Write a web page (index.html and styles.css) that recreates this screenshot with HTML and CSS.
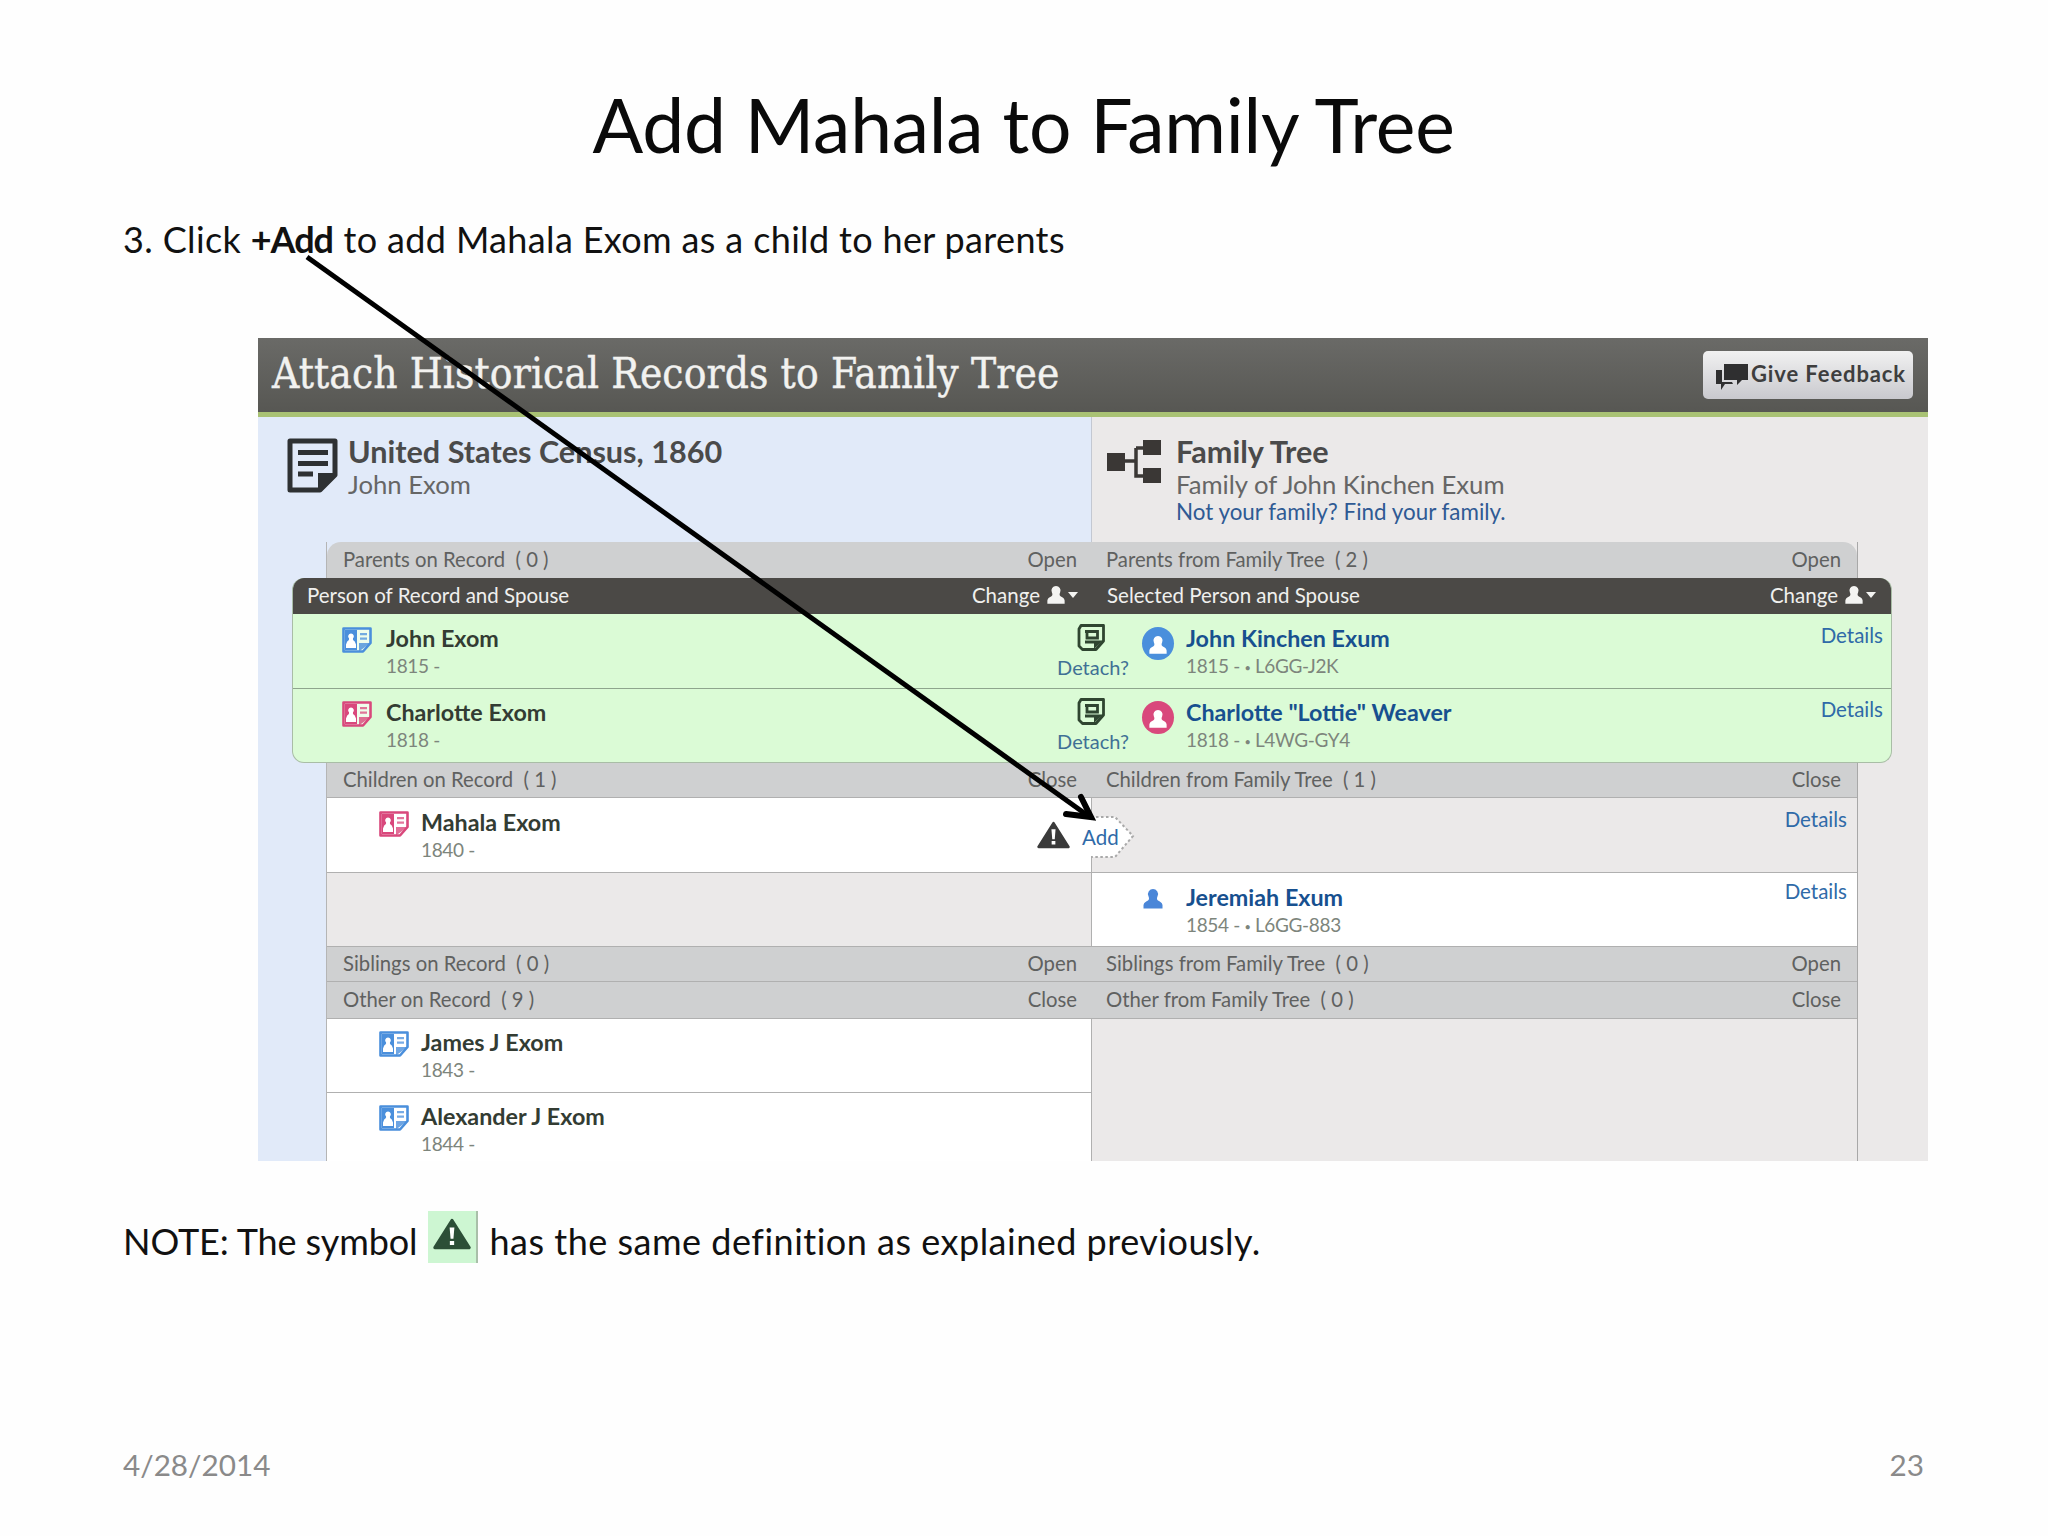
FILE: index.html
```html
<!DOCTYPE html>
<html lang="en">
<head>
<meta charset="utf-8">
<title>Add Mahala to Family Tree</title>
<link rel="stylesheet" href="styles.css">
</head>
<body>
<svg class="defs" width="0" height="0" aria-hidden="true">
  <symbol id="rec" viewBox="0 0 30 26">
    <path d="M1.5 1.5H28.5V16L21 24.5H1.5Z" fill="#fff" fill-opacity=".55" stroke="currentColor" stroke-width="2.6" stroke-linejoin="round"/>
    <path d="M3 3H15V23H3Z" fill="currentColor"/>
    <path d="M9 6.5a2.8 2.8 0 0 1 2 4.8c-.4 1.3.3 2.200 1.800 3.200L14 17.500V21H4V17.500L5.200 14.500C6.700 13.500 7.400 12.600 7 11.300A2.800 2.800 0 0 1 9 6.500Z" fill="#fff"/>
    <path d="M18 6h7v2.200h-7zM18 10.500h7v2.200h-7z" fill="currentColor" opacity=".75"/>
    <path d="M17 24.500V16H28.500Z" fill="currentColor" opacity=".8"/>
  </symbol>
  <symbol id="detach" viewBox="0 0 28 27">
    <path d="M4 1.500H26.500V17L19 25.500H5.500L2 22V5Z" fill="none" stroke="currentColor" stroke-width="2.800" stroke-linejoin="round"/>
    <path d="M8 7.500H20.500V14H10V8" fill="none" stroke="currentColor" stroke-width="2.800"/>
    <path d="M8 18H17" fill="none" stroke="currentColor" stroke-width="2.800"/>
    <path d="M17 25V16.500H26Z" fill="currentColor"/>
  </symbol>
  <symbol id="person" viewBox="0 0 22 22">
    <path d="M11 1a5 5 0 0 1 4.600 7c-.9 2-.9 3.500.4 4.500 1.800 1.200 4 1.800 4.500 4.500v3.500H1.500V17c.5-2.700 2.700-3.300 4.500-4.500 1.300-1 1.300-2.500.4-4.500A5 5 0 0 1 11 1Z" fill="currentColor"/>
  </symbol>
  <symbol id="warn" viewBox="0 0 32 26">
    <path d="M16 1.500 30.500 24.500H1.500Z" fill="currentColor" stroke="currentColor" stroke-width="2.500" stroke-linejoin="round"/>
    <path d="M14 7.500h4l-.8 9.500h-2.400zM14.200 18.800h3.600v3.400h-3.600z" fill="#fff"/>
  </symbol>
</svg>

<main class="slide">
  <h1 class="title">Add Mahala to Family Tree</h1>
  <p class="step">3. Click <b>+Add</b> to add Mahala Exom as a child to her parents</p>

  <section class="app">
    <header class="app-head">
      <h2 class="app-title">Attach Historical Records to Family Tree</h2>
      <button class="feedback" type="button">
        <svg class="feedback-icon" viewBox="0 0 34 28" aria-hidden="true">
          <path d="M9 1H33V17H27L22 22V17H9Z" fill="#2f2f30"/>
          <path d="M1 7H7V19H17L18 21H10L6 27V21H1Z" fill="#2f2f30"/>
        </svg>
        Give Feedback
      </button>
    </header>

    <div class="body">
      <div class="sources">
        <div class="source">
          <svg class="doc-icon" viewBox="0 0 51 55" aria-hidden="true">
            <path d="M3 3H48V37L33 52H3Z" fill="none" stroke="#2e3133" stroke-width="5" stroke-linejoin="round"/>
            <path d="M11 14.500H41M11 25.500H41M11 36H26" stroke="#2e3133" stroke-width="5"/>
            <path d="M31 53V35H49Z" fill="#2e3133"/>
          </svg>
          <div class="source-text">
            <div class="source-name">United States Census, 1860</div>
            <div class="source-sub">John Exom</div>
          </div>
        </div>
        <div class="source source-tree">
          <svg class="tree-icon" viewBox="0 0 54 43" aria-hidden="true">
            <path d="M0 13H18V31H0ZM36 0H54V15H36ZM36 28H54V43H36Z" fill="#3a3735"/>
            <path d="M18 21H29M29 8H36M29 8V36H36" fill="none" stroke="#3a3735" stroke-width="3.500"/>
          </svg>
          <div class="source-text">
            <div class="source-name">Family Tree</div>
            <div class="source-sub">Family of John Kinchen Exum</div>
            <a class="source-link">Not your family? Find your family.</a>
          </div>
        </div>
      </div>

      <div class="table">
        <div class="row bar bar-top">
          <div class="cell-l"><span>Parents on Record&nbsp; ( 0 )</span><span>Open</span></div>
          <div class="cell-r"><span>Parents from Family Tree&nbsp; ( 2 )</span><span>Open</span></div>
        </div>
      </div>

      <div class="selected">
        <div class="sel-head">
          <div class="sel-l"><span>Person of Record and Spouse</span><span class="change">Change <svg class="chg-icon"><use href="#person"/></svg><i class="caret"></i></span></div>
          <div class="sel-r"><span>Selected Person and Spouse</span><span class="change">Change <svg class="chg-icon"><use href="#person"/></svg><i class="caret"></i></span></div>
        </div>
        <div class="sel-row">
          <div class="person sel-person"><svg class="rec male"><use href="#rec"/></svg><div><div class="name">John Exom</div><div class="date">1815 -</div></div></div>
          <div class="detach"><svg class="detach-icon"><use href="#detach"/></svg><a>Detach?</a></div>
          <div class="person tree-person">
            <span class="avatar male-bg"><svg class="avatar-p"><use href="#person"/></svg></span>
            <div class="grow"><div class="name link">John Kinchen Exum</div><div class="date">1815 - <span class="dot">•</span> L6GG-J2K</div></div>
            <a class="details">Details</a>
          </div>
        </div>
        <div class="sel-row sel-row-last">
          <div class="person sel-person"><svg class="rec female"><use href="#rec"/></svg><div><div class="name">Charlotte Exom</div><div class="date">1818 -</div></div></div>
          <div class="detach"><svg class="detach-icon"><use href="#detach"/></svg><a>Detach?</a></div>
          <div class="person tree-person">
            <span class="avatar female-bg"><svg class="avatar-p"><use href="#person"/></svg></span>
            <div class="grow"><div class="name link">Charlotte "Lottie" Weaver</div><div class="date">1818 - <span class="dot">•</span> L4WG-GY4</div></div>
            <a class="details">Details</a>
          </div>
        </div>
      </div>

      <div class="table">
        <div class="row bar bar-children">
          <div class="cell-l"><span>Children on Record&nbsp; ( 1 )</span><span>Close</span></div>
          <div class="cell-r"><span>Children from Family Tree&nbsp; ( 1 )</span><span>Close</span></div>
        </div>
        <div class="row rec-row rec-row-a">
          <div class="white rec-cell">
            <div class="person"><svg class="rec female"><use href="#rec"/></svg><div><div class="name">Mahala Exom</div><div class="date">1840 -</div></div></div>
            <svg class="warn-icon"><use href="#warn"/></svg>
          </div>
          <div class="grey tree-cell"><span></span><a class="details">Details</a></div>
          <div class="add-tag">
            <svg class="add-shape" viewBox="0 0 60 44" aria-hidden="true">
              <path d="M0 2H40L58 21L40 42H0Z" fill="#fff"/>
              <path d="M16 2H40L58 21L40 42H16" fill="none" stroke="#a9a9a9" stroke-width="2" stroke-dasharray="2.500 2.500"/>
            </svg>
            <a class="add-text">Add</a>
          </div>
        </div>
        <div class="row rec-row rec-row-b">
          <div class="grey"></div>
          <div class="white tree-cell">
            <div class="person tree-person-plain"><svg class="small-person"><use href="#person"/></svg><div><div class="name link">Jeremiah Exum</div><div class="date">1854 - <span class="dot">•</span> L6GG-883</div></div></div>
            <a class="details">Details</a>
          </div>
        </div>
        <div class="row bar bar-sib">
          <div class="cell-l"><span>Siblings on Record&nbsp; ( 0 )</span><span>Open</span></div>
          <div class="cell-r"><span>Siblings from Family Tree&nbsp; ( 0 )</span><span>Open</span></div>
        </div>
        <div class="row bar bar-other">
          <div class="cell-l"><span>Other on Record&nbsp; ( 9 )</span><span>Close</span></div>
          <div class="cell-r"><span>Other from Family Tree&nbsp; ( 0 )</span><span>Close</span></div>
        </div>
        <div class="split">
          <div class="split-l">
            <div class="white rec-cell other-row"><div class="person"><svg class="rec male"><use href="#rec"/></svg><div><div class="name">James J Exom</div><div class="date">1843 -</div></div></div></div>
            <div class="white rec-cell other-row"><div class="person"><svg class="rec male"><use href="#rec"/></svg><div><div class="name">Alexander J Exom</div><div class="date">1844 -</div></div></div></div>
          </div>
          <div class="split-r"></div>
        </div>
      </div>
    </div>
  </section>

  <p class="note">
    <span class="note-lead">NOTE: The symbol</span>
    <span class="swatch"><svg class="swatch-icon"><use href="#warn"/></svg></span>
    <span class="note-rest">has the same definition as explained previously.</span>
  </p>

  <footer class="foot"><span>4/28/2014</span><span>23</span></footer>

  <svg class="pointer" viewBox="0 0 2048 1536" aria-hidden="true">
    <path d="M307 257L1087 815" fill="none" stroke="#000" stroke-width="5"/>
    <path d="M1066 814L1091 817L1081 797" fill="none" stroke="#000" stroke-width="6" stroke-linecap="round" stroke-linejoin="miter"/>
  </svg>
</main>
</body>
</html>
```

FILE: styles.css
```css
* { box-sizing: border-box; }
html, body { margin: 0; padding: 0; background: #fff; }
.defs { position: absolute; }
body { font-family: "Lato", "Liberation Sans", sans-serif; color: #000; }

.slide {
  position: relative;
  width: 2048px;
  height: 1536px;
  padding: 77px 124px 51px 123px;
  display: flex;
  flex-direction: column;
  background: #fefefe;
  overflow: hidden;
}
.title {
  margin: 0;
  font-size: 75px;
  font-weight: 400;
  line-height: 94px;
  text-align: center;
  letter-spacing: -0.2px;
  color: #0a0a0a;
}
.step {
  margin: 45px 0 0;
  font-size: 36px;
  line-height: 46px;
  letter-spacing: 0.35px;
  color: #111;
}
.step b { font-weight: 700; letter-spacing: -1px; margin-right: 1px; }

.app {
  margin: 76px 0 0 135px;
  width: 1670px;
  height: 823px;
  overflow: hidden;
  flex: none;
  font-size: 20.500px;
  color: #5e5e5e;
}
.app-head {
  height: 79px;
  padding: 0 15px 5px 14px;
  display: flex;
  align-items: center;
  justify-content: space-between;
  background: linear-gradient(#6a6a67, #575753);
  border-bottom: 5px solid #a9c274;
}
.app-title {
  margin: 2px 0 0;
  font-family: "DejaVu Serif Condensed", "DejaVu Serif", serif;
  font-size: 42px;
  font-weight: 400;
  color: #f2f2f0;
  white-space: nowrap;
  letter-spacing: 0.12px;
  -webkit-text-stroke: 0.4px #f2f2f0;
}
.feedback {
  width: 210px;
  height: 48px;
  margin-top: 4px;
  padding: 0 0 2px 12px;
  display: flex;
  align-items: center;
  gap: 2px;
  border: 0;
  border-radius: 5px;
  background: linear-gradient(#f1f1f1, #c9c9ce);
  font: 700 22px "Lato", sans-serif;
  color: #3e3e3e;
  letter-spacing: 0.9px;
  white-space: nowrap;
}
.feedback-icon { width: 34px; height: 28px; flex: none; margin-top: 6px; }

.body { background: linear-gradient(to right, #e1eaf9 0, #e1eaf9 833px, #ebe9e9 833px); }

.sources { display: grid; grid-template-columns: 833px 837px; height: 125px; }
.source { display: flex; padding: 21px 0 0 29px; gap: 10px; }
.source-tree { padding: 22px 0 0 15px; gap: 15px; border-left: 1px solid #c3c8d2; }
.doc-icon { width: 51px; height: 55px; flex: none; }
.tree-icon { width: 54px; height: 43px; flex: none; margin-top: 1px; }
.source-text { display: flex; flex-direction: column; margin-top: -3px; }
.source-tree .source-text { margin-top: -4px; }
.source-name { font-size: 30.600px; line-height: 34px; font-weight: 700; color: #4a4a4a; white-space: nowrap; }
.source-sub { font-size: 25.700px; line-height: 30px; color: #666; white-space: nowrap; }
.source-link { font-size: 22.400px; line-height: 26px; color: #2f5a94; white-space: nowrap; }

.table { margin-left: 68px; width: 1532px; border-left: 1px solid #b5b5b5; border-right: 1px solid #a8a8a8; }
.row { position: relative; display: grid; grid-template-columns: 764px 766px; }
.bar { background: #cfd0d1; border-bottom: 1px solid #b0b0b0; color: #5f6160; font-size: 20.300px; }
.bar > div { display: flex; align-items: center; justify-content: space-between; padding-bottom: 2px; }
.cell-l { padding: 0 14px 0 16px; }
.cell-r { padding: 0 16px 0 15px; }
.bar-top { height: 36px; border-radius: 14px 14px 0 0; border-bottom: 0; }
.bar-children { height: 35px; }
.bar-sib { height: 35px; }
.bar-other { height: 37px; }

.selected {
  margin-left: 34px;
  width: 1600px;
  height: 185px;
  border-radius: 12px;
  background: #dbfbd6;
  border: 1px solid #a9bda6;
  border-top: 0;
  overflow: hidden;
}
.sel-head {
  height: 36px;
  padding-bottom: 2px;
  display: grid;
  grid-template-columns: 799px 800px;
  background: #4b4946;
  color: #f0f0ee;
  font-size: 20.500px;
}
.sel-head > div { display: flex; align-items: center; justify-content: space-between; }
.sel-l { padding: 0 14px 0 14px; }
.sel-r { padding: 0 16px 0 15px; }
.change { display: inline-flex; align-items: center; gap: 6px; }
.chg-icon { width: 20px; height: 20px; color: #f4f4f2; }
.caret { width: 0; height: 0; margin-left: -4px; border: 5px solid transparent; border-top: 6px solid #f4f4f2; border-bottom: 0; }

.sel-row {
  display: grid;
  grid-template-columns: 764px 72px 1fr;
  height: 75px;
  border-bottom: 1px solid #8ea58d;
}
.sel-row-last { height: 73px; border-bottom: 0; }
.person { display: flex; gap: 14px; }
.sel-person { padding: 11px 0 0 49px; }
.sel-row-last .sel-person, .sel-row-last .tree-person { padding-top: 10px; }
.tree-person { padding: 11px 8px 0 13px; gap: 12px; }
.grow { flex: 1; }
.name { font-size: 23.300px; line-height: 27px; font-weight: 700; color: #333c33; white-space: nowrap; }
.link { color: #17508f; }
.date { font-size: 19px; line-height: 27px; letter-spacing: -0.35px; color: #7d857c; white-space: nowrap; }
.dot { font-size: 11px; vertical-align: 1px; }
.rec { width: 30px; height: 26px; flex: none; margin-top: 2px; }
.male { color: #4a8fdc; }
.female { color: #d9487c; }

.detach { display: flex; flex-direction: column; align-items: center; padding-top: 10px; color: #2f4530; }
.detach a { font-size: 20px; line-height: 27px; margin-top: 3px; color: #3f7095; white-space: nowrap; }
.detach-icon { width: 28px; height: 27px; margin-right: 4px; }
.sel-row-last .detach { padding-top: 9px; }

.avatar {
  width: 32px;
  height: 33px;
  flex: none;
  margin-top: 2px;
  border-radius: 50%;
  display: flex;
  align-items: flex-end;
  justify-content: center;
  padding-bottom: 3px;
}
.male-bg { background: #4a8fdc; }
.female-bg { background: #d9487c; }
.avatar-p { width: 20px; height: 24px; color: #fff; }

.details { font-size: 20.500px; line-height: 27px; color: #2f6aa8; margin-top: -3px; white-space: nowrap; }
.rec-row-b .details { margin-top: -6px; }

.rec-row { height: 75px; border-bottom: 1px solid #b0b0b0; }
.rec-row-b { height: 74px; }
.white { background: #fff; }
.grey { background: #ebe9e9; }
.rec-cell { display: flex; justify-content: space-between; padding: 11px 21px 0 52px; position: relative; }
.rec-cell .person { gap: 12px; }
.warn-icon { width: 33px; height: 28px; color: #3a3a3a; margin-top: 12px; }
.tree-cell {
  display: flex;
  justify-content: space-between;
  padding: 11px 10px 0 0;
  border-left: 1px solid #b0b0b0;
}
.tree-person-plain { padding-left: 50px; gap: 22px; }
.small-person { width: 22px; height: 22px; margin-top: 4px; color: #4a86d8; flex: none; }

.add-tag {
  position: absolute;
  left: 748px;
  top: 17px;
  width: 60px;
  height: 44px;
  display: flex;
  align-items: center;
  padding-left: 7px;
}
.add-shape { position: absolute; left: 0; top: 0; width: 60px; height: 44px; }
.add-text { position: relative; font-size: 20.500px; color: #2f6aa8; }

.split { display: grid; grid-template-columns: 764px 766px; height: 143px; }
.split-r { background: #ebe9e9; border-left: 1px solid #b0b0b0; }
.other-row { height: 74px; border-bottom: 1px solid #b0b0b0; padding-top: 10px; }
.other-row:last-child { border-bottom: 0; }

.note {
  margin: 54px 0 0;
  display: flex;
  align-items: center;
  gap: 10px;
  font-size: 36px;
  line-height: 52px;
  color: #111;
}
.note-lead { letter-spacing: -0.1px; }
.note-rest { letter-spacing: 0.5px; }
.swatch {
  width: 50px;
  height: 52px;
  margin-top: -9px;
  display: flex;
  align-items: center;
  justify-content: center;
  background: #cdf6d2;
  border-right: 2px solid #a9bfa9;
  margin-right: 2px;
}
.swatch-icon { width: 38px; height: 32px; color: #2c4f37; margin-top: -6px; }

.foot {
  margin-top: auto;
  display: flex;
  justify-content: space-between;
  font-size: 29.700px;
  line-height: 40px;
  color: #8a8a8a;
}

.pointer { position: absolute; left: 0; top: 0; width: 2048px; height: 1536px; pointer-events: none; }
```
